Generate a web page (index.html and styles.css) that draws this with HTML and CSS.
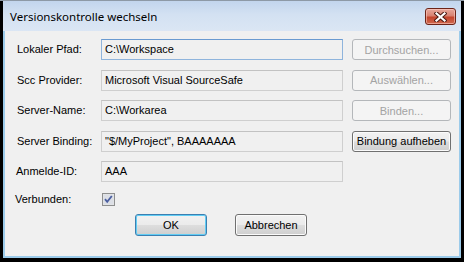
FILE: index.html
```html
<!DOCTYPE html>
<html lang="de">
  <head>
    <meta charset="UTF-8" />
    <meta name="viewport" content="width=device-width, initial-scale=1.0" />
    <title>Versionskontrolle wechseln</title>
    <link rel="stylesheet" href="styles.css">
  </head>
  <body>
    <div class="window">
      <div class="titlebar">
        <span class="title">Versionskontrolle wechseln</span>
        <button type="button" class="close" aria-label="Schließen">
          <svg width="13" height="10" viewBox="0 0 13 10">
            <path d="M2.5 1.5 L10.5 8.5 M10.5 1.5 L2.5 8.5" stroke="#4a1a12" stroke-width="4.2" stroke-linecap="square" fill="none" />
            <path d="M2.5 1.5 L10.5 8.5 M10.5 1.5 L2.5 8.5" stroke="#ffffff" stroke-width="2.2" stroke-linecap="square" fill="none" />
          </svg>
        </button>
      </div>

      <div class="client">
        <div class="form">
          <span class="label">Lokaler Pfad:</span>
          <div class="field focused">C:\Workspace</div>
          <button type="button" class="btn" disabled>Durchsuchen...</button>

          <span class="label">Scc Provider:</span>
          <div class="field">Microsoft Visual SourceSafe</div>
          <button type="button" class="btn" disabled>Auswählen...</button>

          <span class="label">Server-Name:</span>
          <div class="field">C:\Workarea</div>
          <button type="button" class="btn" disabled>Binden...</button>

          <span class="label">Server Binding:</span>
          <div class="field">"$/MyProject", BAAAAAAA</div>
          <button type="button" class="btn">Bindung aufheben</button>

          <span class="label label-id">Anmelde-ID:</span>
          <div class="field">AAA</div>
          <span></span>

          <span class="label label-check">Verbunden:</span>
          <span class="check">
            <svg width="13" height="13" viewBox="0 0 13 13">
              <rect x="0.5" y="0.5" width="12" height="12" fill="#e6e6e6" stroke="#8e8f8f" />
              <rect x="1.5" y="1.5" width="10" height="10" fill="#dcdfe6" />
              <path d="M3 6.2 L5.2 8.8 L9.8 3" stroke="#4b5fa0" stroke-width="1.8" fill="none" />
            </svg>
          </span>
          <span></span>
        </div>

        <div class="actions">
          <button type="button" class="btn default">OK</button>
          <button type="button" class="btn">Abbrechen</button>
        </div>
      </div>
    </div>
  </body>
</html>
```

FILE: styles.css
```css
* {
  box-sizing: border-box;
}

body {
  margin: 0;
  font-family: "Liberation Sans", Arial, sans-serif;
  font-size: 11px;
  color: #000;
  background: #000;
}

.window {
  width: 464px;
  height: 262px;
  padding: 0 3px 4px 3px;
  display: flex;
  flex-direction: column;
  background: #000;
  border-top: 1px solid #8d99a6;
}

.titlebar {
  height: 30px;
  display: flex;
  align-items: flex-start;
  justify-content: space-between;
  padding: 7px 5px 0 7px;
  background: linear-gradient(180deg, #c2d5ed 0%, #d3e1f2 45%, #dbe6f4 100%);

  .title {
    font-family: "Noto Sans", sans-serif;
    font-size: 11.5px;
    line-height: 18px;
    color: #000;
  }
}

.close {
  width: 31px;
  height: 17px;
  padding: 0;
  display: flex;
  align-items: center;
  justify-content: center;
  border: 1px solid #6d2418;
  border-radius: 3px;
  background: linear-gradient(180deg, #e8a89c 0%, #d88271 45%, #c4452d 55%, #cf6a4f 100%);
  box-shadow: inset 0 0 0 1px rgba(255, 210, 200, 0.55);
}

.client {
  flex: 1;
  background: #f0f0f0;
  border: 2px solid #9ccbea;
  border-top: none;
  padding: 8px 0 0 12px;
}

.form {
  display: grid;
  grid-template-columns: 84px 242px 108px;
  grid-template-rows: repeat(5, 21px) 13px;
  row-gap: 9.5px;
  align-items: center;
}

.label {
  line-height: 13px;
}

.label-id {
  margin-left: -1px;
}

.label-check {
  margin-left: -2px;
  margin-top: 3px;
}

.field {
  height: 21px;
  line-height: 19px;
  padding: 0 3px;
  border: 1px solid #cfcfcf;
  border-top-color: #c2c2c2;
  background: #f0f0f0;
  white-space: nowrap;
  overflow: hidden;

  &.focused {
    border-color: #8fb4dc;
    border-top-color: #6a9ad0;
  }
}

.check {
  display: flex;
  margin-left: 1px;
  margin-top: 3px;
}

.btn {
  font: inherit;
  height: 21px;
  padding: 0;
  white-space: nowrap;
  color: #000;
  border: 1px solid #707070;
  border-radius: 3px;
  background: linear-gradient(180deg, #f2f2f2 0%, #ebebeb 48%, #dddddd 52%, #cfcfcf 100%);
  box-shadow: inset 0 0 0 1px #fbfbfb;

  &:disabled {
    color: #a3a3a3;
    border-color: #b4b7ba;
    background: #f4f4f4;
    box-shadow: none;
  }
}

.form .btn {
  width: 99px;
  justify-self: end;
}

.actions {
  display: flex;
  gap: 28px;
  margin-top: 9px;
  padding-left: 118px;

  .btn {
    width: 72px;
    height: 22px;
  }

  .default {
    border-color: #3c7fb1;
    box-shadow: inset 0 0 0 1px #62cdf4;
  }
}
```
